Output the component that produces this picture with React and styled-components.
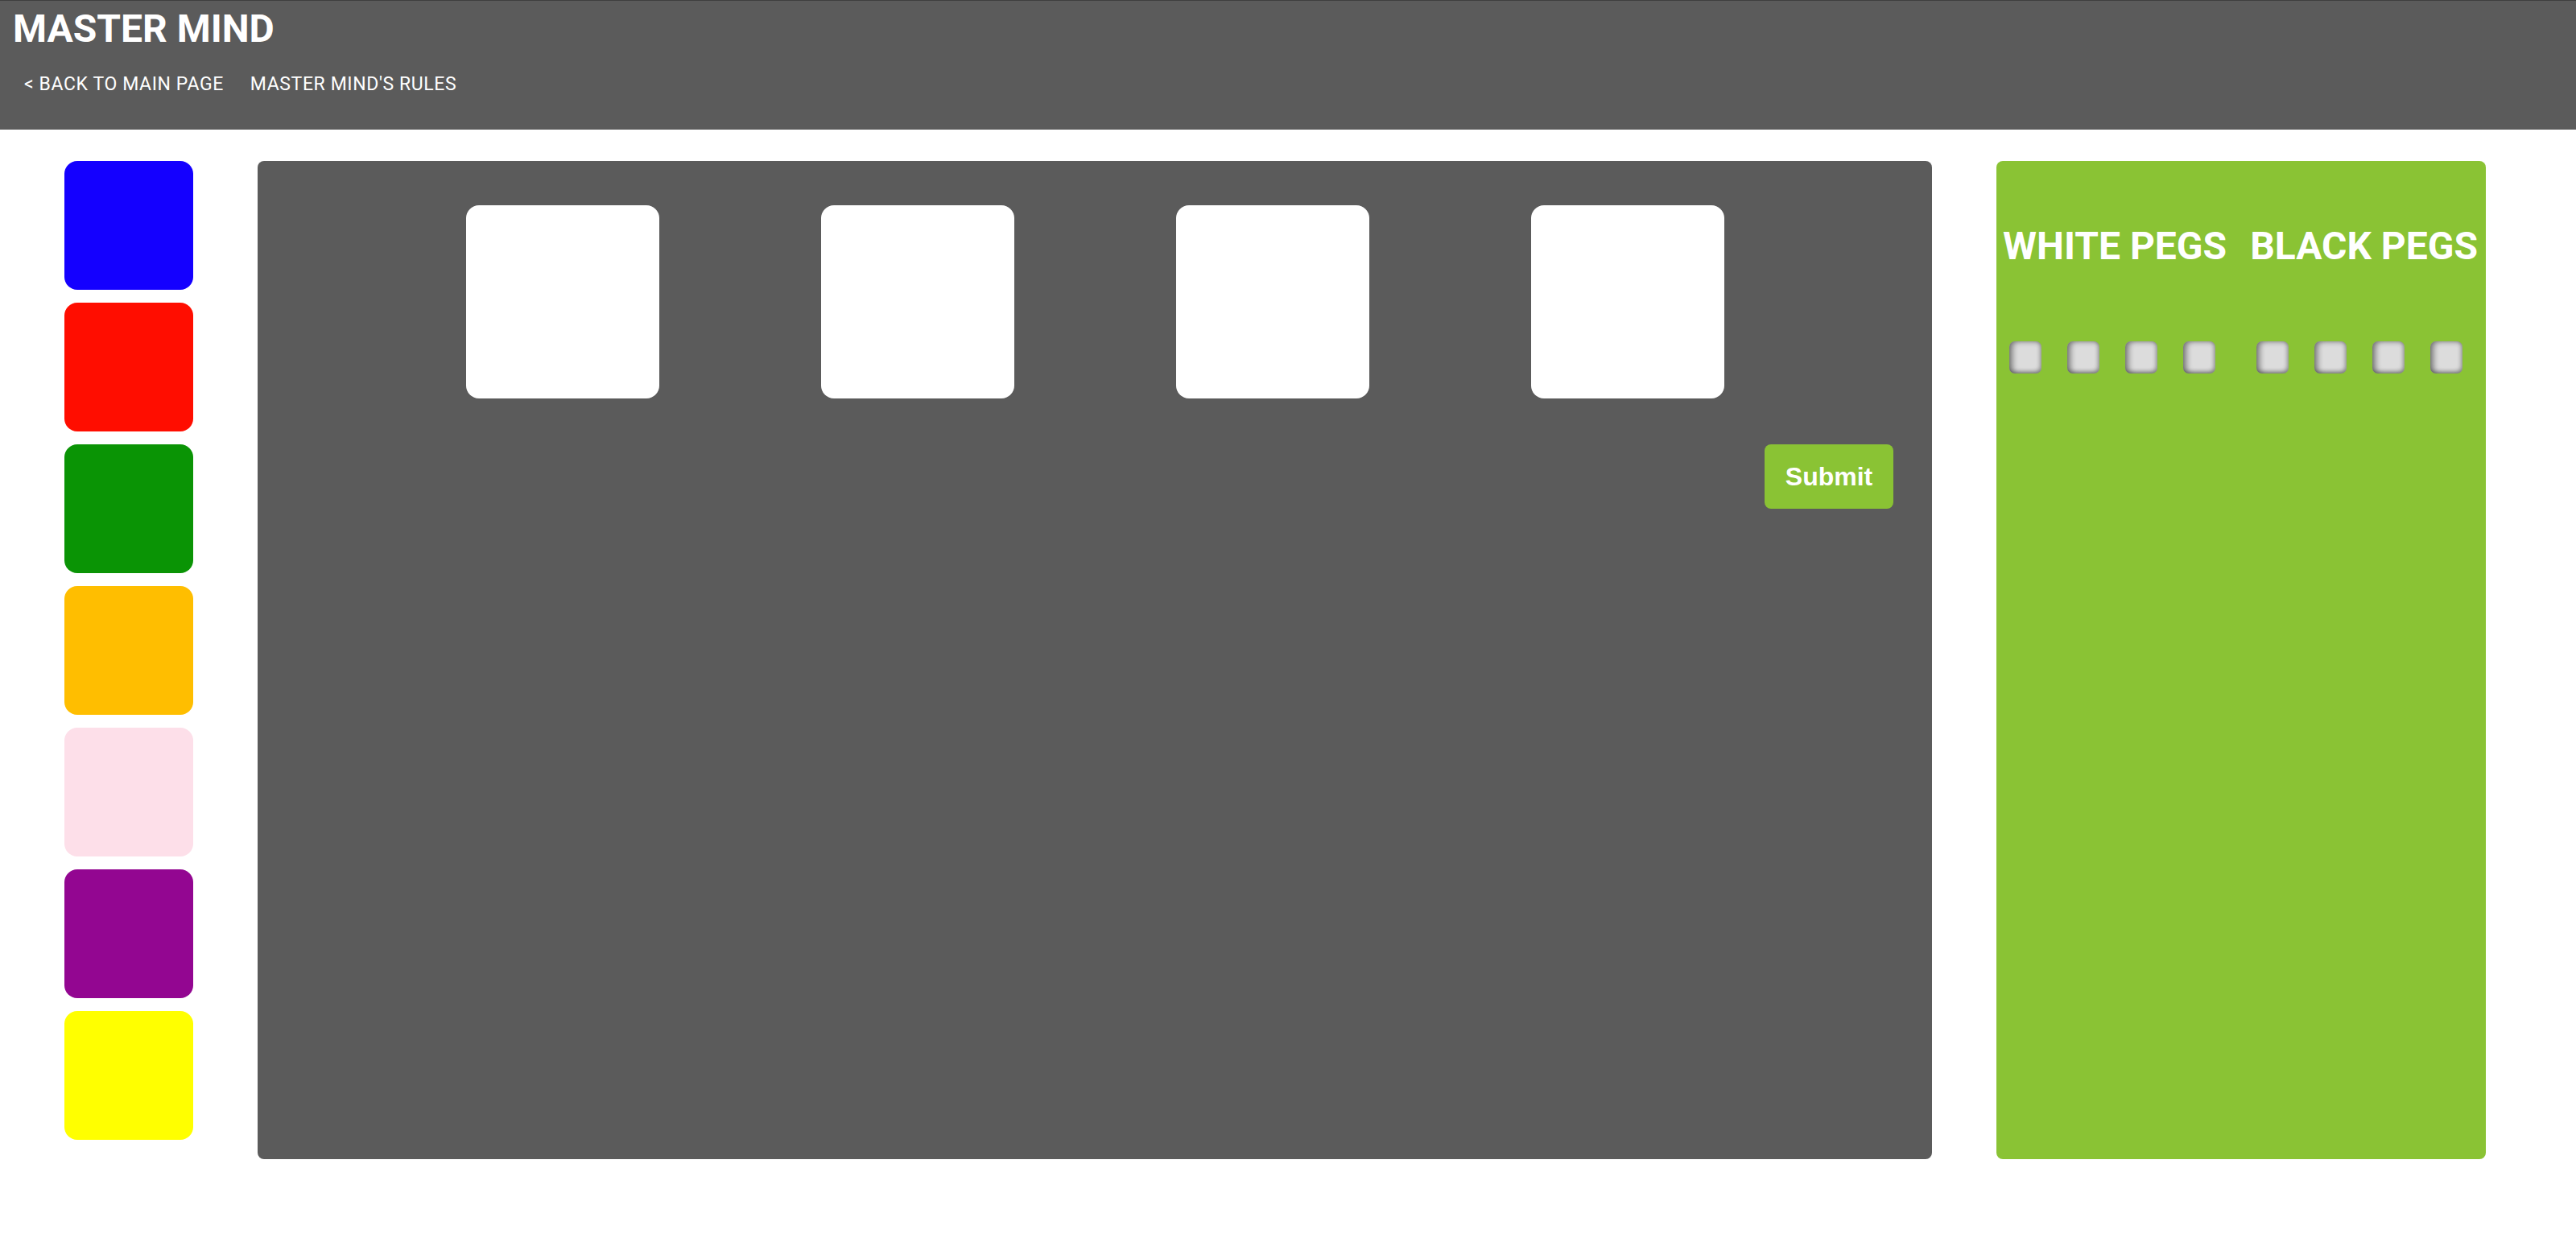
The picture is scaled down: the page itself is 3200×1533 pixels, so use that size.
import styled, { createGlobalStyle } from 'styled-components';

const GlobalStyle = createGlobalStyle`
  body {
    margin: 0;
    background: #ffffff;
    font-family: Roboto, "Liberation Sans", sans-serif;
  }
`

const COLORS = ['#1400ff', '#ff0d00', '#0a9405', '#ffbe00', '#fddfe9', '#930691', '#ffff00'];

const Header = styled.header`
  box-sizing: border-box;
  height: 161px;
  background: #5b5b5b;
  border-top: 1px solid #3e3e3e;
  padding: 6px 0 0 16px;
  color: #ffffff;
`
const Title = styled.h1`
  margin: 0;
  font-size: 48px;
  font-weight: 700;
  line-height: normal;
`
const Nav = styled.nav`
  display: flex;
  gap: 33px;
  margin-top: 27px;
  padding-left: 14px;
`
const NavLink = styled.a`
  color: #ffffff;
  text-decoration: none;
  text-transform: uppercase;
  font-size: 23px;
  letter-spacing: 0.6px;
  line-height: normal;
  cursor: pointer;
`

const Main = styled.main`
  display: flex;
  align-items: flex-start;
  padding: 39px 0 0 80px;
`
const Palette = styled.div`
  display: flex;
  flex-direction: column;
  gap: 16px;
  width: 160px;
`
const ColorChip = styled.div`
  width: 160px;
  height: 160px;
  border-radius: 16px;
  background: ${({ color }) => color};
  cursor: pointer;
`

const Board = styled.section`
  box-sizing: border-box;
  width: 2080px;
  height: 1240px;
  margin-left: 80px;
  padding-top: 55px;
  background: #5b5b5b;
  border-radius: 8px;
`
const GuessRow = styled.div`
  display: flex;
  justify-content: center;
  gap: 201px;
`
const Slot = styled.div`
  width: 240px;
  height: 240px;
  border-radius: 16px;
  background: #ffffff;
`
const Actions = styled.div`
  display: flex;
  justify-content: flex-end;
  margin-top: 57px;
  padding-right: 48px;
`
const SubmitButton = styled.button`
  width: 160px;
  height: 80px;
  border: none;
  border-radius: 8px;
  background: #8ac334;
  color: #ffffff;
  font-family: "Liberation Sans", Arial, sans-serif;
  font-weight: 700;
  font-size: 32px;
  cursor: pointer;
`

const PegPanel = styled.aside`
  box-sizing: border-box;
  width: 608px;
  height: 1240px;
  margin-left: 80px;
  padding: 77px 0 0 8px;
  background: #8ac334;
  border-radius: 8px;
  display: grid;
  grid-template-columns: auto auto;
  justify-content: start;
  align-content: start;
  column-gap: 29px;
`
const PegColumn = styled.div`
  display: flex;
  flex-direction: column;
`
const PegTitle = styled.h2`
  margin: 0;
  color: #ffffff;
  font-size: 48px;
  font-weight: 700;
  line-height: normal;
  white-space: nowrap;
`
const PegRow = styled.div`
  display: flex;
  gap: 32px;
  margin-top: 90px;
  padding-left: 8px;
`
const Peg = styled.div`
  width: 40px;
  height: 40px;
  border-radius: 7px;
  background: #dcdcdc;
  box-shadow: inset 4px 0 7px rgba(0, 0, 0, 0.45), inset -2px -2px 5px rgba(0, 0, 0, 0.3);
`

export default function App() {
  return (
    <>
      <GlobalStyle />
      <Header>
        <Title>MASTER MIND</Title>
        <Nav>
          <NavLink>&lt; Back to main page</NavLink>
          <NavLink>Master Mind's rules</NavLink>
        </Nav>
      </Header>
      <Main>
        <Palette>
          {COLORS.map((c) => <ColorChip key={c} color={c} />)}
        </Palette>
        <Board>
          <GuessRow>
            {[0, 1, 2, 3].map((i) => <Slot key={i} />)}
          </GuessRow>
          <Actions>
            <SubmitButton>Submit</SubmitButton>
          </Actions>
        </Board>
        <PegPanel>
          {['White pegs', 'Black pegs'].map((label) => (
            <PegColumn key={label}>
              <PegTitle>{label.toUpperCase()}</PegTitle>
              <PegRow>
                {[0, 1, 2, 3].map((i) => <Peg key={i} />)}
              </PegRow>
            </PegColumn>
          ))}
        </PegPanel>
      </Main>
    </>
  )
}
